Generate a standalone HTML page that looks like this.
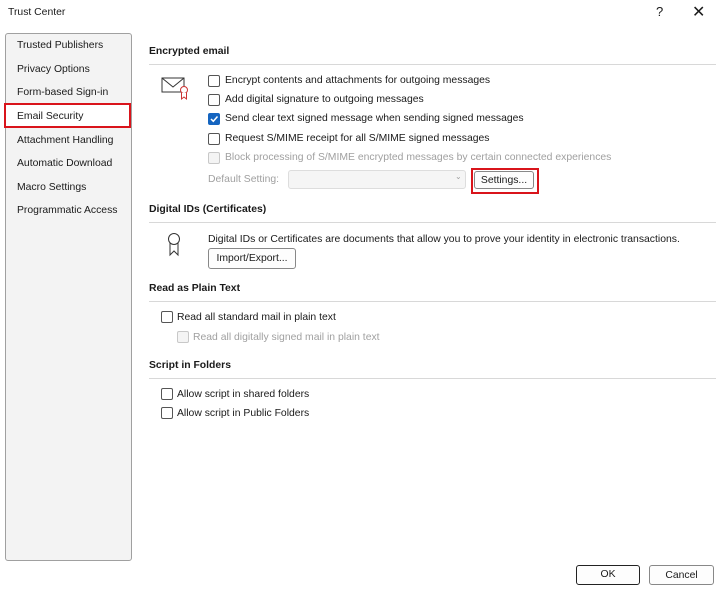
<!DOCTYPE html><html><head><style>
body{margin:0;width:720px;height:591px;background:#fff;font-family:"Liberation Sans",sans-serif;font-size:10.4px;color:#1a1a1a;position:relative;overflow:hidden}
.a{position:absolute;white-space:nowrap}
.side{left:5px;top:33px;width:125px;height:526px;border:1px solid #a0a0a0;border-radius:3px;background:#f3f3f3}
.h{font-weight:bold}
.ln{position:absolute;left:149px;width:567px;height:1px;background:#d8d8d8}
.cb{position:absolute;width:10px;height:10px;border:1px solid #555;border-radius:2px;background:#fff}
.dis{color:#a0a0a0}
.cb.d{border-color:#c8c8c8;background:#f4f4f4}
.btn{position:absolute;border:1px solid #888;border-radius:3px;background:#fdfdfd;text-align:center;box-sizing:border-box}
</style></head><body>
<div class="a" style="left:8px;top:7px">Trust Center</div>
<div class="a" style="left:656px;top:4px;font-size:13px">?</div>
<div class="a" style="left:692px;top:2px;font-size:16px">✕</div>
<div class="a side"></div>
<div class="a" style="left:17px;top:40px">Trusted Publishers</div>
<div class="a" style="left:17px;top:64px">Privacy Options</div>
<div class="a" style="left:17px;top:87px">Form-based Sign-in</div>
<div class="a" style="left:4px;top:103px;width:123px;height:21px;border:2px solid #d9141b;background:#fff"></div>
<div class="a" style="left:17px;top:111px">Email Security</div>
<div class="a" style="left:17px;top:135px">Attachment Handling</div>
<div class="a" style="left:17px;top:158px">Automatic Download</div>
<div class="a" style="left:17px;top:182px">Macro Settings</div>
<div class="a" style="left:17px;top:205px">Programmatic Access</div>

<div class="a h" style="left:149px;top:46px">Encrypted email</div><div class="ln" style="top:64px"></div>
<svg class="a" style="left:160px;top:76px" width="32" height="28"><rect x="2" y="2" width="22" height="14" fill="none" stroke="#333"/><path d="M2 2 L13 11 L24 2" fill="none" stroke="#333"/><circle cx="24" cy="14" r="3.5" fill="#fff" stroke="#c33"/><path d="M21.5 17 V23 L24 21 L26.5 23 V17" fill="#fff" stroke="#c33"/></svg>
<div class="cb" style="left:208px;top:75px"></div><div class="a" style="left:225px;top:75px">Encrypt contents and attachments for outgoing messages</div>
<div class="cb" style="left:208px;top:94px"></div><div class="a" style="left:225px;top:94px">Add digital signature to outgoing messages</div>
<div class="cb" style="left:208px;top:113px;background:#1565c0;border-color:#1565c0"></div><svg class="a" style="left:209px;top:114px" width="10" height="10"><path d="M2 5 L4.3 7.3 L8.5 2.5" stroke="#fff" stroke-width="1.5" fill="none"/></svg><div class="a" style="left:225px;top:113px">Send clear text signed message when sending signed messages</div>
<div class="cb" style="left:208px;top:133px"></div><div class="a" style="left:225px;top:133px">Request S/MIME receipt for all S/MIME signed messages</div>
<div class="cb d" style="left:208px;top:152px"></div><div class="a dis" style="left:225px;top:152px">Block processing of S/MIME encrypted messages by certain connected experiences</div>
<div class="a dis" style="left:208px;top:174px">Default Setting:</div>
<div class="a" style="left:288px;top:170px;width:176px;height:17px;border:1px solid #ddd;border-radius:3px;background:#f5f5f5"></div>
<div class="a dis" style="left:455px;top:172px;font-size:8px">⌄</div>
<div class="a" style="left:471px;top:168px;width:64px;height:22px;border:2px solid #d9141b"></div>
<div class="btn" style="left:474px;top:171px;width:60px;height:18px;line-height:17px">Settings...</div>

<div class="a h" style="left:149px;top:204px">Digital IDs (Certificates)</div><div class="ln" style="top:222px"></div>
<svg class="a" style="left:166px;top:232px" width="16" height="26"><circle cx="8" cy="7" r="5.5" fill="none" stroke="#333"/><path d="M4 11 V23 L8 19 L12 23 V11" fill="none" stroke="#333"/></svg>
<div class="a" style="left:208px;top:234px">Digital IDs or Certificates are documents that allow you to prove your identity in electronic transactions.</div>
<div class="btn" style="left:208px;top:248px;width:88px;height:21px;line-height:20px">Import/Export...</div>

<div class="a h" style="left:149px;top:283px">Read as Plain Text</div><div class="ln" style="top:301px"></div>
<div class="cb" style="left:161px;top:311px"></div><div class="a" style="left:177px;top:312px">Read all standard mail in plain text</div>
<div class="cb d" style="left:177px;top:331px"></div><div class="a dis" style="left:193px;top:332px">Read all digitally signed mail in plain text</div>

<div class="a h" style="left:149px;top:360px">Script in Folders</div><div class="ln" style="top:378px"></div>
<div class="cb" style="left:161px;top:388px"></div><div class="a" style="left:177px;top:389px">Allow script in shared folders</div>
<div class="cb" style="left:161px;top:407px"></div><div class="a" style="left:177px;top:408px">Allow script in Public Folders</div>

<div class="btn" style="left:576px;top:565px;width:64px;height:20px;line-height:18px;border:1.5px solid #222">OK</div>
<div class="btn" style="left:649px;top:565px;width:65px;height:20px;line-height:19px">Cancel</div>
</body></html>
